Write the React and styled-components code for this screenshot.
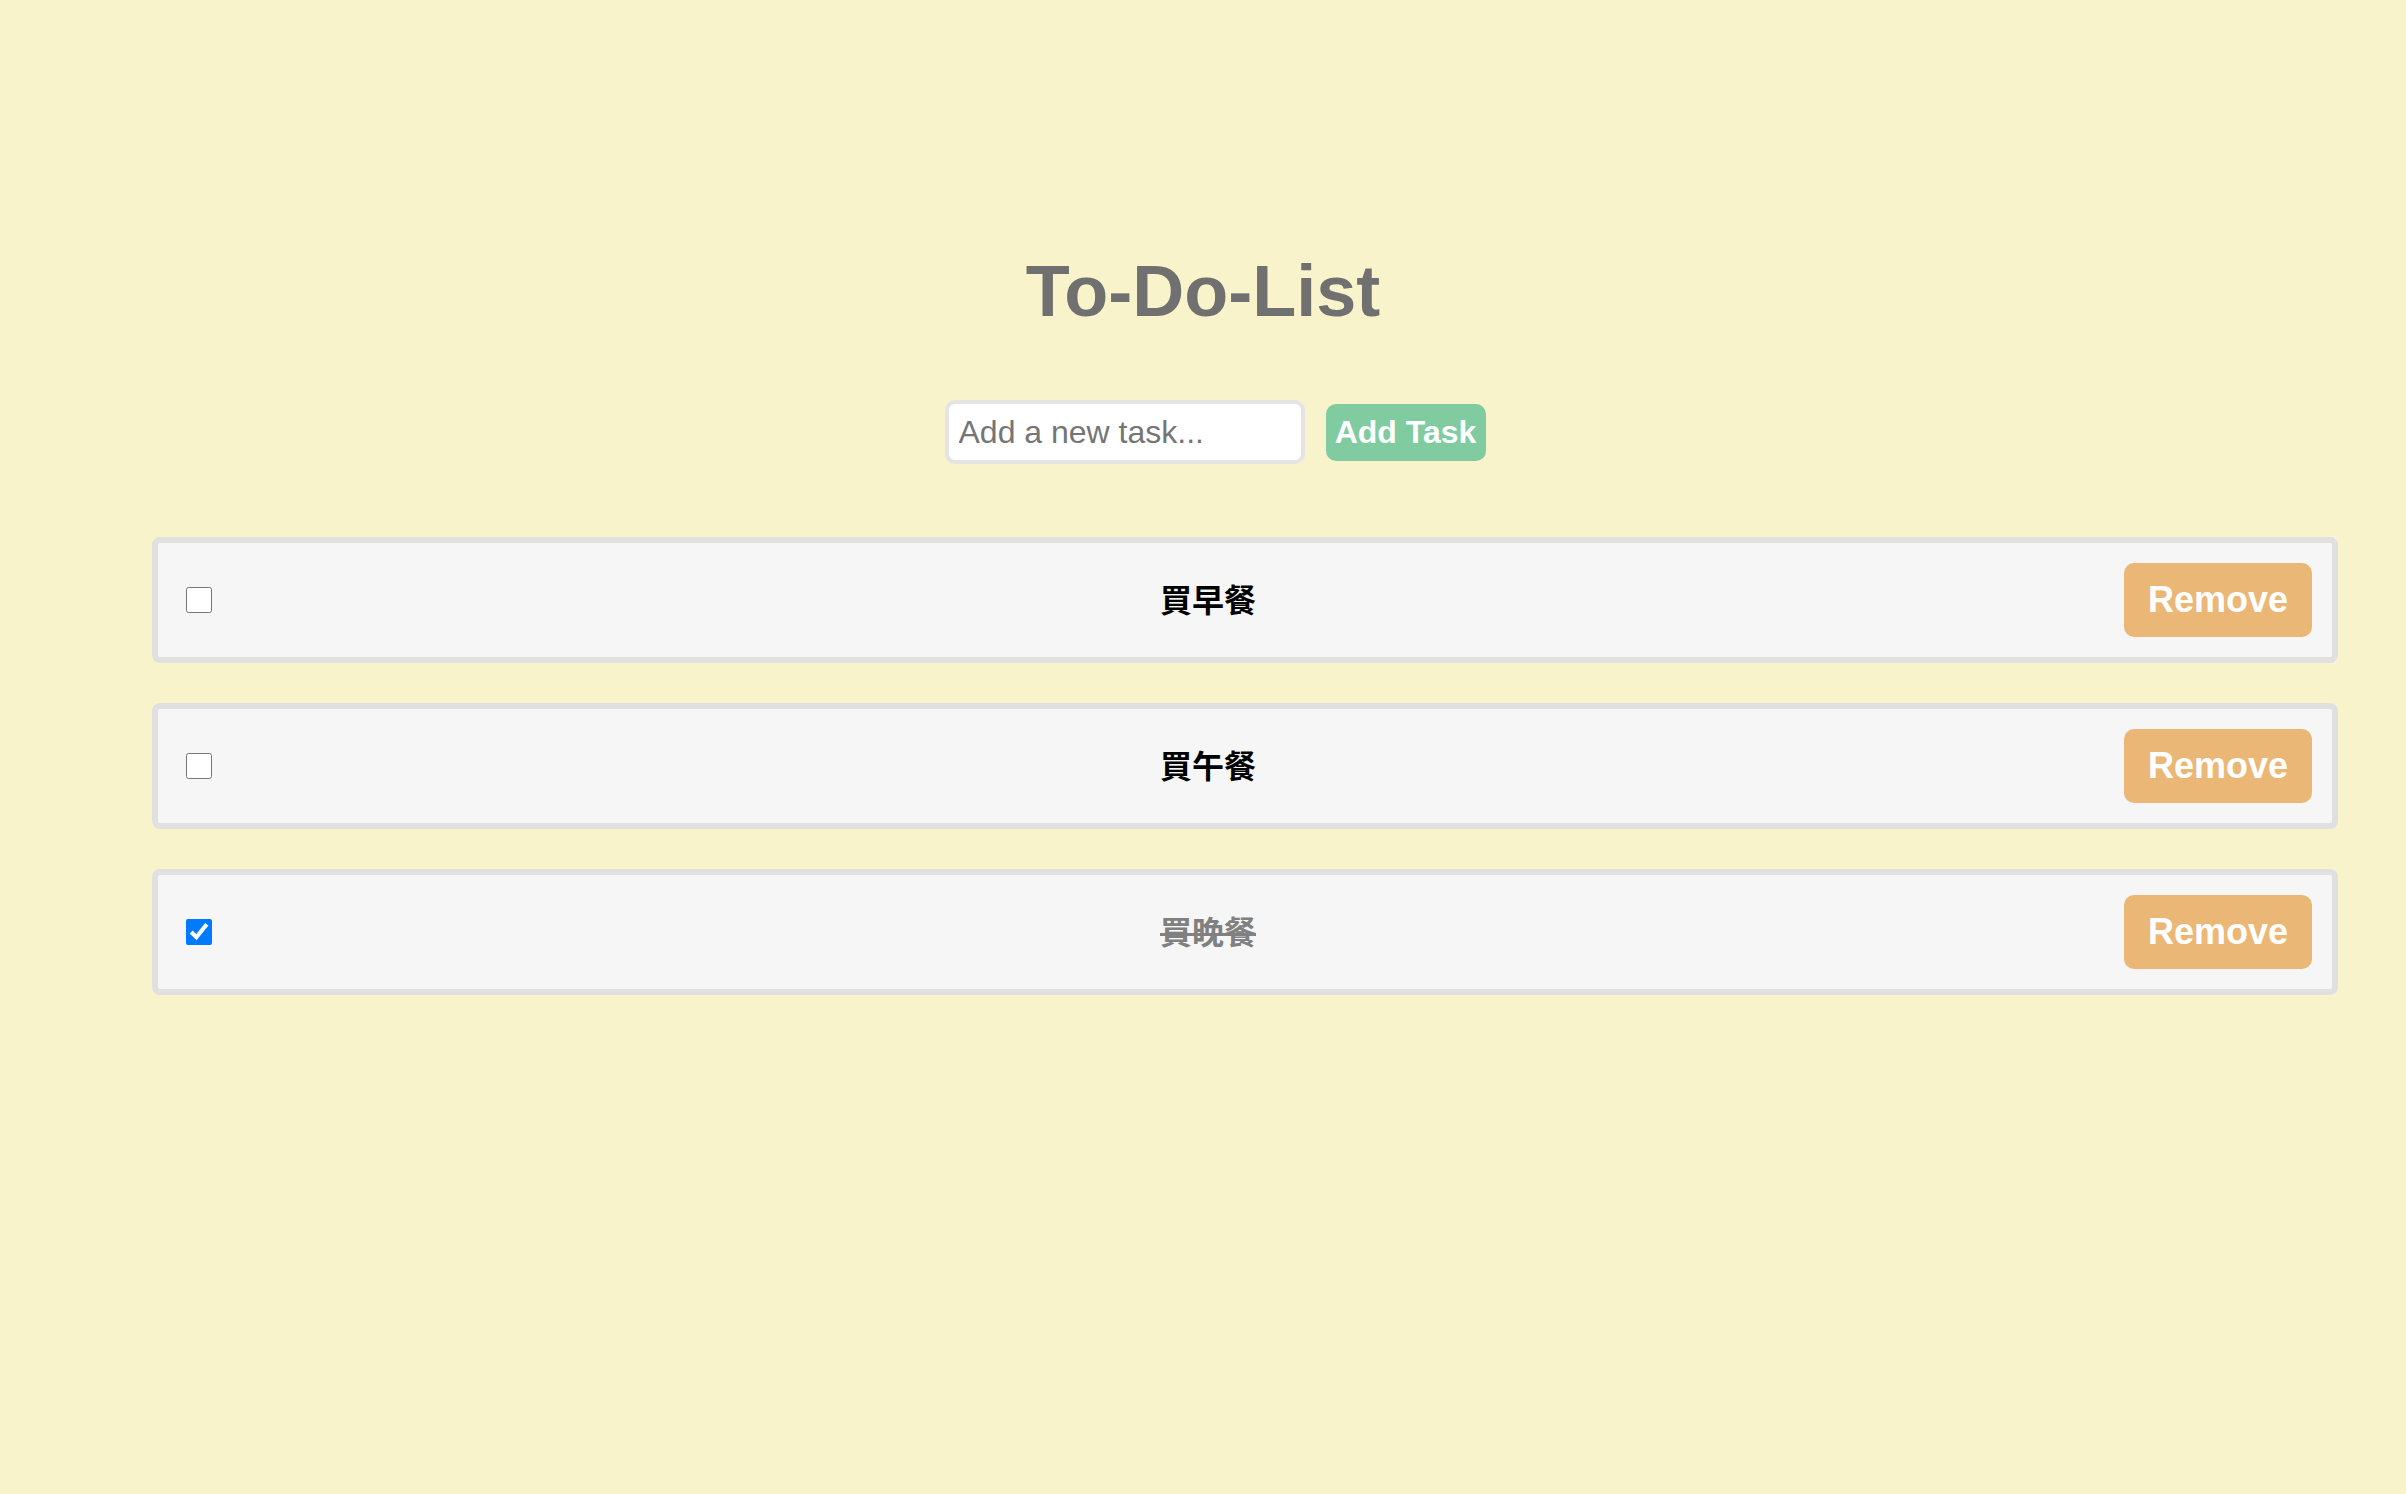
import React, { useState } from "react";
import styled, { createGlobalStyle } from "styled-components";

const GlobalStyle = createGlobalStyle`
  html, body {
    margin: 0;
    padding: 0;
    background: #f8f3cb;
    font-family: "Liberation Sans", Arial, "Noto Sans CJK TC", sans-serif;
  }
`;

const Page = styled.div`
  min-height: 1494px;
  box-sizing: border-box;
  padding-top: 255px;
  display: flex;
  flex-direction: column;
  align-items: center;
`;

const Title = styled.h1`
  margin: 0;
  font-family: "Liberation Sans", Arial, sans-serif;
  font-size: 72px;
  line-height: 72px;
  font-weight: 700;
  color: #707070;
`;

const InputRow = styled.div`
  display: flex;
  align-items: center;
  gap: 21px;
  margin: 73px 0 0 24px;
`;

const TaskInput = styled.input`
  box-sizing: border-box;
  width: 360px;
  height: 64px;
  border: 4px solid #e4e4e4;
  border-radius: 10px;
  padding: 0 10px;
  background: #fff;
  font-family: "Liberation Sans", Arial, sans-serif;
  font-size: 32px;
  color: #333;
  outline: none;
  &::placeholder {
    color: #757575;
  }
`;

const AddButton = styled.button`
  box-sizing: border-box;
  width: 160px;
  height: 57px;
  border: none;
  border-radius: 10px;
  background: #80cba0;
  color: #fff;
  font-family: "Liberation Sans", Arial, sans-serif;
  font-size: 32px;
  font-weight: 700;
  padding: 0;
  white-space: nowrap;
  cursor: pointer;
`;

const List = styled.ul`
  list-style: none;
  margin: 73px 0 0 0;
  padding: 0 68px 0 152px;
  align-self: stretch;
  display: flex;
  flex-direction: column;
  gap: 40px;
`;

const Item = styled.li`
  box-sizing: border-box;
  height: 126px;
  display: flex;
  align-items: center;
  padding: 20px;
  border: 6px solid #e0e0e0;
  border-radius: 8px;
  background: #f6f6f6;
`;

const Check = styled.input`
  width: 26px;
  height: 26px;
  margin: 0 6px 0 8px;
  accent-color: #007aff;
  cursor: pointer;
`;

const Label = styled.span`
  flex: 1;
  text-align: center;
  padding: 0 0 4px 74px;
  font-family: "Liberation Sans", Arial, "Noto Sans CJK TC", sans-serif;
  font-size: 32px;
  font-weight: 700;
  color: ${(p) => (p.$done ? "#808080" : "#000")};
  text-decoration: ${(p) => (p.$done ? "line-through" : "none")};
`;

const RemoveButton = styled.button`
  box-sizing: border-box;
  width: 188px;
  height: 74px;
  border: none;
  border-radius: 10px;
  background: #ebb777;
  color: #fff;
  font-family: "Liberation Sans", Arial, sans-serif;
  font-size: 36px;
  font-weight: 700;
  padding: 0;
  cursor: pointer;
`;

const initialTasks = [
  { id: 1, text: "買早餐", done: false },
  { id: 2, text: "買午餐", done: false },
  { id: 3, text: "買晚餐", done: true },
];

export default function App() {
  const [tasks, setTasks] = useState(initialTasks);
  const [value, setValue] = useState("");

  const addTask = () => {
    if (!value.trim()) return;
    setTasks([...tasks, { id: Date.now(), text: value.trim(), done: false }]);
    setValue("");
  };

  const toggle = (id) => {
    setTasks(tasks.map((t) => (t.id === id ? { ...t, done: !t.done } : t)));
  };

  const remove = (id) => {
    setTasks(tasks.filter((t) => t.id !== id));
  };

  return (
    <>
      <GlobalStyle />
      <Page>
        <Title>To-Do-List</Title>
        <InputRow>
          <TaskInput
            placeholder="Add a new task..."
            value={value}
            onChange={(e) => setValue(e.target.value)}
          />
          <AddButton onClick={addTask}>Add Task</AddButton>
        </InputRow>
        <List>
          {tasks.map((t) => (
            <Item key={t.id}>
              <Check type="checkbox" checked={t.done} onChange={() => toggle(t.id)} />
              <Label $done={t.done}>{t.text}</Label>
              <RemoveButton onClick={() => remove(t.id)}>Remove</RemoveButton>
            </Item>
          ))}
        </List>
      </Page>
    </>
  );
}
